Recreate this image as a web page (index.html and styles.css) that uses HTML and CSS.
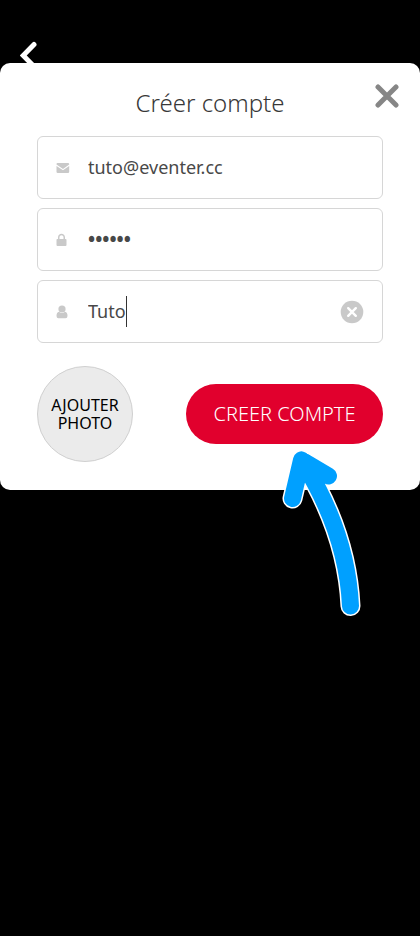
FILE: index.html
```html
<!DOCTYPE html>
<html lang="fr">
<head>
  <meta charset="utf-8">
  <meta name="viewport" content="width=device-width, initial-scale=1">
  <title>Créer compte</title>
  <link rel="stylesheet" href="styles.css">
</head>
<body>
  <header class="topbar">
    <button class="back" type="button" aria-label="Retour">
      <svg width="20" height="32" viewBox="0 0 20 32" aria-hidden="true"><path d="M14 4.500L3.200 15.500L14 26.500" fill="none" stroke="#fff" stroke-width="5" stroke-linecap="round" stroke-linejoin="miter"/></svg>
    </button>
  </header>
  <main class="card">
    <h1 class="title">Créer compte</h1>
    <button class="close" type="button" aria-label="Fermer">
      <svg width="24" height="24" viewBox="0 0 24 24" aria-hidden="true"><path d="M3 3L21 21M21 3L3 21" stroke="#868686" stroke-width="5" stroke-linecap="round"/></svg>
    </button>
    <form class="form">
      <label class="field">
        <svg class="icon" viewBox="0 0 14 14" aria-hidden="true"><path d="M1.500 2H12Q13.200 2 13.200 3V3.600L7 8L.5 3.600V3Q.5 2 1.500 2ZM.5 5L7 9.300L13.200 5V10.800Q13.200 12 12 12H1.700Q.5 12 .5 10.800Z"/></svg>
        <input class="input" type="email" aria-label="E-mail" value="tuto@eventer.cc">
      </label>
      <label class="field">
        <svg class="icon" viewBox="0 0 14 14" aria-hidden="true"><path fill-rule="evenodd" d="M1.200 6H2V4.300C2-.4 9-.4 9 4.300V6H9.600Q10.500 6 10.500 7V12Q10.500 13 9.500 13H1.500Q.5 13 .5 12V7Q.5 6 1.200 6ZM3.500 6H7.500V4.300C7.500 1.600 3.500 1.600 3.500 4.300Z"/></svg>
        <input class="input password" type="password" aria-label="Mot de passe" value="tuto12">
      </label>
      <div class="field">
        <svg class="icon" viewBox="0 0 14 14" aria-hidden="true"><circle cx="6" cy="4" r="3.600"/><path d="M3 6.800Q6 9.200 9 6.800Q11.500 7.200 11.500 11Q11.500 13.300 9.500 13.300H2.500Q.5 13.300 .5 11Q.5 7.200 3 6.800Z"/></svg>
        <input class="input name" type="text" aria-label="Nom" value="Tuto">
        <span class="caret"></span>
        <button class="clear" type="button" aria-label="Effacer">
          <svg width="24" height="24" viewBox="0 0 24 24" aria-hidden="true"><circle cx="12" cy="12" r="11.300" fill="#c9c9c9"/><path d="M8.200 8.200L15.800 15.800M15.800 8.200L8.200 15.800" stroke="#fff" stroke-width="2.400" stroke-linecap="round"/></svg>
        </button>
      </div>
      <div class="actions">
        <button class="photo" type="button">AJOUTER<br>PHOTO</button>
        <button class="submit" type="button">CREER COMPTE</button>
      </div>
    </form>
    <svg class="arrow" width="90" height="180" viewBox="275 445 90 180" aria-hidden="true">
      <g fill="none" stroke-linecap="round" stroke-linejoin="round">
        <path d="M292.500 498.500L301.500 460L328.500 476M301.500 460Q347 532 350.500 606" stroke="#fff" stroke-width="20"/>
        <path d="M292.500 498.500L301.500 460L328.500 476M301.500 460Q347 532 350.500 606" stroke="#00a0ff" stroke-width="17"/>
      </g>
    </svg>
  </main>
</body>
</html>
```
FILE: styles.css
```css
* {
  box-sizing: border-box;
}

body {
  margin: 0;
  min-height: 100vh;
  background: #000;
  color: #484848;
  font-family: "Noto Sans", sans-serif;
}

button {
  padding: 0;
  border: 0;
  background: none;
  font-family: inherit;
}

svg {
  display: block;
}

.topbar {
  height: 63px;
  padding: 40px 20px 0;
}

.card {
  position: relative;
  padding: 24px 37px 28px;
  border-radius: 10px;
  background: #fff;
}

.title {
  margin: 0 0 17px;
  color: #383838;
  font-size: 24px;
  font-weight: 300;
  line-height: 32px;
  text-align: center;
}

.close {
  position: absolute;
  top: 21px;
  right: 21px;
}

.form {
  display: flex;
  flex-direction: column;
  gap: 9px;
}

.field {
  display: flex;
  align-items: center;
  height: 63px;
  padding: 0 18px;
  border: 1px solid #d6d6d6;
  border-radius: 6px;
}

.icon {
  flex: none;
  width: 14px;
  height: 14px;
  margin-right: 18px;
  fill: #c9c9c9;
}

.input {
  flex: 1;
  min-width: 0;
  padding: 0 0 2px;
  border: 0;
  outline: 0;
  background: none;
  color: inherit;
  font-family: inherit;
  font-size: 18px;
  line-height: 24px;
}

.password {
  font-family: "Open Sans", sans-serif;
  font-size: 19px;
  font-weight: 700;
}

.name {
  flex: none;
  field-sizing: content;
}

.caret {
  width: 1px;
  height: 31px;
  background: #333;
}

.clear {
  margin-left: auto;
}

.actions {
  display: flex;
  align-items: center;
  justify-content: space-between;
  margin-top: 14px;
}

.photo {
  width: 96px;
  height: 96px;
  border: 1px solid #d0d0d0;
  border-radius: 50%;
  background: #ebebeb;
  color: #000;
  font-size: 16px;
  line-height: 18px;
}

.submit {
  width: 197px;
  height: 60px;
  padding-bottom: 2px;
  border-radius: 30px;
  background: #e1002d;
  color: #fff;
  font-size: 20px;
  font-weight: 300;
}

.arrow {
  position: absolute;
  top: 382px;
  right: 55px;
}
```
